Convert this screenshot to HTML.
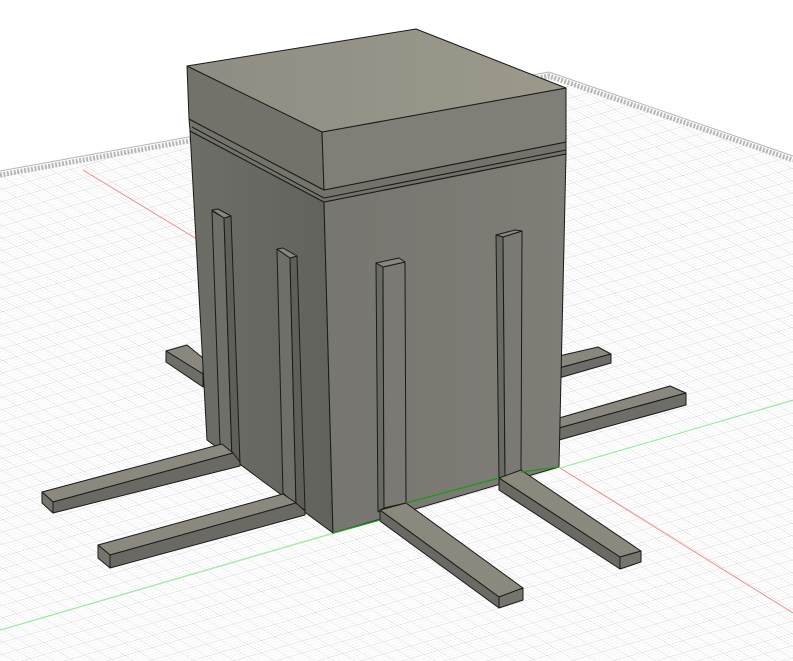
<!DOCTYPE html>
<html><head><meta charset="utf-8"><style>html,body{margin:0;padding:0;background:#fff;width:793px;height:661px;overflow:hidden}</style></head>
<body>
<svg width="793" height="661" viewBox="0 0 793 661" xmlns="http://www.w3.org/2000/svg">
<defs>
<pattern id="minor" width="3.4" height="3.4" patternUnits="userSpaceOnUse" patternTransform="matrix(1 0.61 1 -0.29 560 468)">
<path d="M0 0H3.4M0 0V3.4" stroke="#ebebeb" stroke-width="0.6" fill="none"/>
</pattern>
<pattern id="major" width="13.6" height="13.6" patternUnits="userSpaceOnUse" patternTransform="matrix(1 0.61 1 -0.29 560 468)">
<path d="M0 0H13.6M0 0V13.6" stroke="#cacaca" stroke-width="0.7" fill="none"/>
</pattern>
<linearGradient id="gtop" x1="0" y1="0" x2="1" y2="0"><stop offset="0" stop-color="#8f8d83"/><stop offset="1" stop-color="#9c998c"/></linearGradient>
<linearGradient id="gfront" x1="0" y1="0" x2="1" y2="0"><stop offset="0" stop-color="#777670"/><stop offset="1" stop-color="#7e7d76"/></linearGradient>
<linearGradient id="gleft" x1="0" y1="0" x2="1" y2="0"><stop offset="0" stop-color="#6e6e68"/><stop offset="1" stop-color="#62625d"/></linearGradient>
</defs>
<polygon points="0,175 549,76 793,160 793,661 0,661" fill="url(#minor)"/>
<polygon points="0,175 549,76 793,160 793,661 0,661" fill="url(#major)"/>
<polyline points="0,175 549,76 793,160" fill="none" stroke="#9a9a9a" stroke-width="5" stroke-dasharray="2 1.5" opacity="0.7"/>
<polyline points="0,171 549,72 793,156" fill="none" stroke="#b5b5b5" stroke-width="1"/>
<line x1="83" y1="170" x2="210" y2="247" stroke="#f08a8a" stroke-width="1"/>
<line x1="560" y1="468" x2="793" y2="613" stroke="#f08a8a" stroke-width="1"/>
<line x1="0" y1="630" x2="340" y2="531" stroke="#90ee90" stroke-width="1"/>
<line x1="560" y1="468" x2="793" y2="400" stroke="#90ee90" stroke-width="1"/>
<g stroke="#1a1a1a" stroke-width="1" stroke-linejoin="round">
<polygon points="166,351 187,345 203,358 203,374" fill="#8a877e"/>
<polygon points="166,351 203,374 203,387 166,362" fill="#6e6d67"/>
<polygon points="559,356 598,347 611,354 559,368" fill="#8a877e"/>
<polygon points="559,368 611,354 611,363 559,378" fill="#6e6d67"/>
<polygon points="559,418 670,386 686,393 559,428" fill="#8a877e"/>
<polygon points="559,428 686,393 686,405 559,440" fill="#6e6d67"/>
<polygon points="190,131 324,202 333,533 207,440" fill="url(#gleft)"/>
<polygon points="324,202 566,154 559,467 333,533" fill="url(#gfront)"/>
<polygon points="189,119 324,190 566,142 566,154 324,202 190,131" fill="#74736b"/>
<polyline points="192,127 324,198 566,150" fill="none"/>
<polygon points="187,66 322,132 324,190 189,119" fill="#72716a"/>
<polygon points="322,132 566,88 566,142 324,190" fill="#807f77"/>
<polygon points="187,66 416,29 566,88 322,132" fill="url(#gtop)"/>
<polygon points="212,211 224,218 232,460 220,445" fill="#6f6e68"/>
<polygon points="224,218 231,216 240,463 232,460" fill="#5f5f5a"/>
<polygon points="212,210 218,209 231,216 224,218" fill="#8a877e"/>
<polygon points="277,249 290,258 296,505 283,493" fill="#6f6e68"/>
<polygon points="290,258 297,256 305,510 296,505" fill="#5f5f5a"/>
<polygon points="277,249 283,248 297,256 290,258" fill="#8a877e"/>
<polygon points="42,492 222,444 233,453 53,502" fill="#8b887e"/>
<polygon points="53,502 233,453 240,462 240,466 53,513" fill="#6a6964"/>
<polygon points="42,492 53,502 53,513 42,503" fill="#75746d"/>
<polygon points="98,545 283,494 296,503 110,555" fill="#8b887e"/>
<polygon points="110,555 296,503 305,511 305,515 110,568" fill="#6a6964"/>
<polygon points="98,545 110,555 110,568 98,558" fill="#75746d"/>
<polygon points="376,263 383,267 384,508 378,512" fill="#6a6a64"/>
<polygon points="383,267 405,262 406,503 384,508" fill="#7a7973"/>
<polygon points="376,263 399,258 405,262 383,267" fill="#8a877e"/>
<polygon points="496,235 503,237 505,476 499,480" fill="#6a6a64"/>
<polygon points="503,237 522,231 521,472 505,476" fill="#7a7973"/>
<polygon points="496,235 515,230 522,231 503,237" fill="#8a877e"/>
<polygon points="380,510 406,503 523,588 499,597" fill="#8b887e"/>
<polygon points="380,510 499,597 499,608 380,521" fill="#6a6964"/>
<polygon points="499,597 523,588 523,600 499,608" fill="#75746d"/>
<polygon points="499,478 521,470 641,551 620,557" fill="#8b887e"/>
<polygon points="499,478 620,557 620,569 499,490" fill="#6a6964"/>
<polygon points="620,557 641,551 641,562 620,569" fill="#75746d"/>
</g>
<line x1="333" y1="533" x2="380" y2="520" stroke="#1a9a1a" stroke-width="1.2"/>
<line x1="406" y1="503" x2="499" y2="478" stroke="#1a9a1a" stroke-width="1.2"/>
<line x1="521" y1="472" x2="559" y2="467" stroke="#1a9a1a" stroke-width="1.2"/>
</svg>
</body></html>
